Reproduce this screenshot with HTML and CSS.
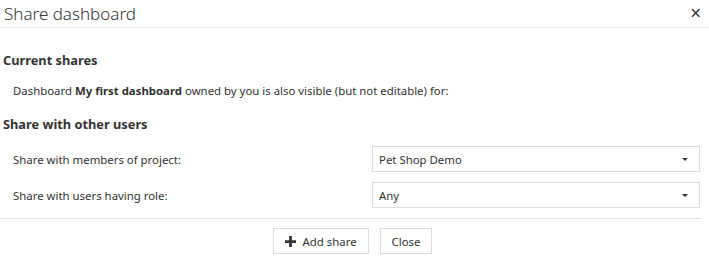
FILE: index.html
```html
<!DOCTYPE html>
<html>
<head>
    <meta charset="utf-8" />
    <title>Share dashboard</title>
    <link rel="stylesheet" href="styles.css">
</head>
<body>
    <div class="header">
        <h3 class="title">Share dashboard</h3>
        <span class="close">&times;</span>
    </div>
    <div class="content">
        <h4 class="section">Current shares</h4>
        <p class="info">Dashboard <b>My first dashboard</b> owned by you is also visible (but not editable) for:</p>
        <h4 class="section">Share with other users</h4>
        <div class="row">
            <span class="label">Share with members of project:</span>
            <div class="select"><span>Pet Shop Demo</span><i class="caret"></i></div>
        </div>
        <div class="row">
            <span class="label">Share with users having role:</span>
            <div class="select"><span>Any</span><i class="caret"></i></div>
        </div>
    </div>
    <div class="footer">
        <button class="btn">
            <svg width="11" height="11" viewBox="0 0 12 12"><path d="M4.5 0h3v4.5H12v3H7.5V12h-3V7.5H0v-3h4.5z" fill="#333" /></svg>
            Add share
        </button>
        <button class="btn">Close</button>
    </div>
</body>
</html>
```
FILE: styles.css
```css
* {
    padding: 0;
    margin: 0;
    box-sizing: border-box;
}

body {
    font-family: "Noto Sans", "Open Sans", sans-serif;
    font-size: 11.4px;
    color: #333;
    background: #fff;
    width: 709px;
}

.header {
    height: 28px;
    border-bottom: 1px #e5e5e5 solid;
    display: flex;
    align-items: center;
    justify-content: space-between;
    padding: 0 8px 0 4px;
}

.title {
    font-size: 17px;
    font-weight: 300;
    line-height: 26px;
    color: #333;
}

.close {
    font-size: 19px;
    line-height: 16px;
    color: #333;
    margin-bottom: 2px;
}

.content {
    padding: 22px 1px 10px 3px;
    border-bottom: 1px #e0e0e0 solid;
    margin-right: 8px;
}

.section {
    font-size: 12.8px;
    font-weight: bold;
    line-height: 20px;
}

.info {
    padding: 12px 0 0 10px;
    line-height: 18px;
    margin-bottom: 14px;
}

.row {
    display: flex;
    align-items: center;
    justify-content: space-between;
    padding-left: 10px;
    margin-top: 12px;
}

.row + .row {
    margin-top: 10px;
}

.select {
    width: 328px;
    height: 26px;
    border: 1px #ddd solid;
    display: flex;
    align-items: center;
    justify-content: space-between;
    padding: 0 11px 0 6px;
}

.caret {
    width: 0;
    height: 0;
    border-left: 3px solid transparent;
    border-right: 3px solid transparent;
    border-top: 3px solid #333;
}

.footer {
    display: flex;
    justify-content: center;
    gap: 11px;
    padding: 9px 4px 0 0;
}

.btn {
    height: 26px;
    background: #fff;
    border: 1px #ddd solid;
    font-family: inherit;
    font-size: 11.4px;
    color: #333;
    padding: 0 11px;
    display: flex;
    align-items: center;
    gap: 7px;
}
```
